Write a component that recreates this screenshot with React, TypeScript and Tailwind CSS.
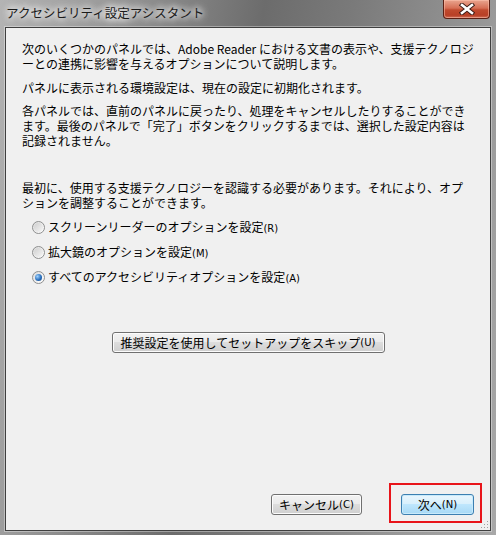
import React from "react";

const font = { fontFamily: '"Noto Sans CJK JP", "Noto Sans", sans-serif' };

function Radio({ checked, label, hk }: { checked?: boolean; label: string; hk: string }) {
  return (
    <div className="flex h-[25px] items-center">
      <div className="ml-[26px] flex h-[13px] w-[13px] items-center justify-center rounded-full border border-[#8e8f8f] bg-[linear-gradient(135deg,#dcdcdc,#ffffff)]">
        {checked ? (
          <div className="h-[7px] w-[7px] rounded-full bg-[radial-gradient(circle_at_35%_35%,#9fd3ff,#2a6fbd_55%,#14457f)]" />
        ) : (
          <div className="h-[9px] w-[9px] rounded-full bg-[linear-gradient(135deg,#cfcfcf,#f6f6f6)]" />
        )}
      </div>
      <span className="ml-[3px] whitespace-nowrap text-[12px] leading-[15px] text-black">
        {label}
        <span className="text-[11px]" style={{ fontFamily: '"DejaVu Sans", sans-serif', fontSize: "10px" }}>{hk}</span>
      </span>
    </div>
  );
}

function Btn({ children, w, blue }: { children: React.ReactNode; w: string; blue?: boolean }) {
  return (
    <div
      className={
        "flex h-[21px] items-center justify-center rounded-[3px] border text-[12px] leading-[15px] text-black " +
        w +
        (blue
          ? " border-[#3c7fb1] bg-[linear-gradient(to_bottom,#eaf6fd_0%,#d9f0fc_45%,#bee6fd_50%,#a7d9f5_100%)] shadow-[inset_0_0_0_1px_#c8eafb]"
          : " border-[#707070] bg-[linear-gradient(to_bottom,#f2f2f2_0%,#ebebeb_45%,#dddddd_50%,#cfcfcf_100%)] shadow-[inset_0_0_0_1px_#fcfcfc]")
      }
    >
      {children}
    </div>
  );
}

export default function App() {
  const hk = { fontFamily: '"DejaVu Sans", sans-serif', fontSize: "10px" };
  return (
    <div
      className="flex h-[535px] w-[496px] flex-col bg-[linear-gradient(100deg,#b4b4b4_0%,#9a9a9a_18%,#6c6c6c_45%,#7a7a7a_60%,#9a9a9a_85%,#a8a8a8_100%)]"
      style={font}
    >
      {/* title bar */}
      <div className="relative flex h-[27px] shrink-0 items-start">
        <span className="ml-[6px] mt-[5px] whitespace-nowrap text-[12.5px] leading-[16px] text-[#1b1b1b] [text-shadow:0_0_6px_#ffffff,0_0_8px_#ffffff,0_0_10px_#ffffff]">
          アクセシビリティ設定アシスタント
        </span>
        <div className="absolute left-[443px] top-0 flex h-[19px] w-[47px] items-center justify-center rounded-b-[4px] border border-t-0 border-[#5b2014] bg-[linear-gradient(to_bottom,#e9a58f_0%,#d66f55_45%,#c04a2e_55%,#b83f25_85%,#d0705a_100%)] shadow-[inset_0_0_0_1px_rgba(255,200,180,0.5)]">
          <svg width="16" height="12" viewBox="0 0 16 12">
            <path d="M3 2 L13 10 M13 2 L3 10" stroke="#3a1a14" strokeWidth="4.4" strokeLinecap="square" />
            <path d="M3 2 L13 10 M13 2 L3 10" stroke="#ffffff" strokeWidth="2.6" strokeLinecap="square" />
          </svg>
        </div>
      </div>

      {/* panel */}
      <div className="mb-[4px] ml-[5px] mr-[5px] flex flex-1 flex-col border border-[#3f3f3f] bg-[#f0f0f0] shadow-[0_0_0_1px_rgba(255,255,255,0.35)]">
        <div className="flex flex-1 flex-col text-[12px] leading-[15px] text-black">
          <p className="ml-[16px] mt-[13px] whitespace-nowrap">
            次のいくつかのパネルでは、Adobe Reader における文書の表示や、支援テクノロジ
            <br />
            ーとの連携に影響を与えるオプションについて説明します。
          </p>
          <p className="ml-[16px] mt-[9px] whitespace-nowrap">パネルに表示される環境設定は、現在の設定に初期化されます。</p>
          <p className="ml-[16px] mt-[8px] whitespace-nowrap">
            各パネルでは、直前のパネルに戻ったり、処理をキャンセルしたりすることができ
            <br />
            ます。最後のパネルで「完了」ボタンをクリックするまでは、選択した設定内容は
            <br />
            記録されません。
          </p>
          <p className="ml-[16px] mt-[32px] whitespace-nowrap">
            最初に、使用する支援テクノロジーを認識する必要があります。それにより、オプ
            <br />
            ションを調整することができます。
          </p>
          <div className="mt-[5px] flex flex-col">
            <Radio label="スクリーンリーダーのオプションを設定" hk="(R)" />
            <Radio label="拡大鏡のオプションを設定" hk="(M)" />
            <Radio checked label="すべてのアクセシビリティオプションを設定" hk="(A)" />
          </div>
          <div className="mt-[42px] flex justify-center">
            <Btn w="w-[273px]">
              推奨設定を使用してセットアップをスキップ<span style={hk}>(U)</span>
            </Btn>
          </div>
          <div className="flex-1" />
          <div className="relative mb-[15px] flex justify-end pr-[16px]">
            <Btn w="w-[91px]">
              キャンセル<span style={hk}>(C)</span>
            </Btn>
            <div className="relative ml-[39px]">
              <Btn w="w-[73px]" blue>
                次へ<span style={hk}>(N)</span>
              </Btn>
              <div className="pointer-events-none absolute bottom-[-8px] left-[-12px] right-[-8px] top-[-11px] border-2 border-[#e8141a]" />
            </div>
            <svg className="absolute bottom-[-14px] right-[1px]" width="8" height="8" viewBox="0 0 8 8">
              <rect x="6" y="0" width="1" height="1" fill="#a0a0a0" />
              <rect x="3" y="3" width="1" height="1" fill="#a0a0a0" />
              <rect x="6" y="3" width="1" height="1" fill="#a0a0a0" />
              <rect x="0" y="6" width="1" height="1" fill="#a0a0a0" />
              <rect x="3" y="6" width="1" height="1" fill="#a0a0a0" />
              <rect x="6" y="6" width="1" height="1" fill="#a0a0a0" />
            </svg>
          </div>
        </div>
      </div>
    </div>
  );
}
